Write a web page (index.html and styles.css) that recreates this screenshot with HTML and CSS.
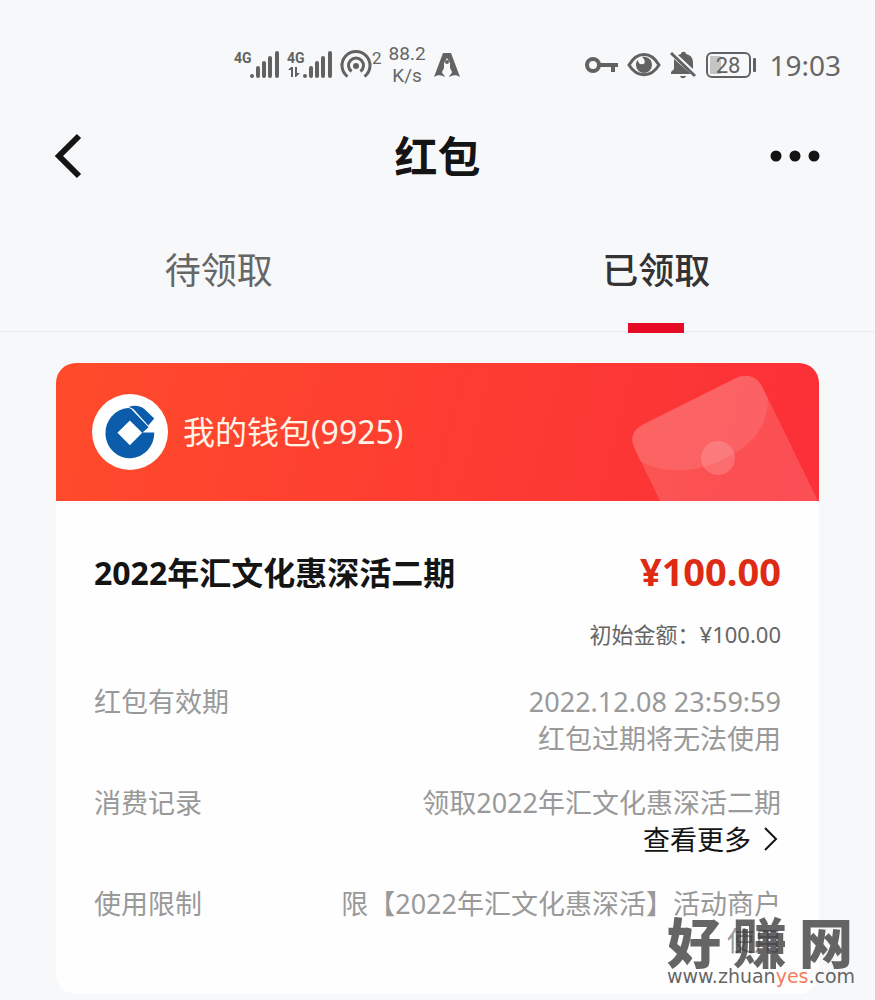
FILE: index.html
```
<!DOCTYPE html>
<html lang="zh-CN">
<head>
<meta charset="UTF-8" />
<meta name="viewport" content="width=device-width, initial-scale=1.0"/>
<title>红包</title>
<link rel="stylesheet" href="styles.css">
</head>
<body>

<div class="status-bar">
  <div class="status-left">
    <!-- signal, first SIM -->
    <svg class="signal" width="46" height="30" viewBox="0 0 46 30">
      <text x="-1" y="13" class="net">4G</text>
      <circle cx="17" cy="26" r="2"/>
      <path d="M23 18v8M29 13v13M35 8v18M42 3v23"/>
    </svg>
    <!-- signal, second SIM -->
    <svg class="signal" width="46" height="30" viewBox="0 0 46 30">
      <text x="-1" y="13" class="net">4G</text>
      <path class="arrows" d="M0 20l3-3h2v10h-2v-7zM7 17h2v6h3l-4 4h-1z"/>
      <circle cx="17" cy="26" r="2"/>
      <path d="M23 18v8M29 13v13M35 8v18M42 3v23"/>
    </svg>
    <div class="hotspot">
      <svg width="31" height="30" viewBox="0 0 31 30">
        <circle cx="15" cy="16" r="3"/>
        <path d="M6.500 26.500a14 14 0 1 1 17 0M10.500 21.500a7.500 7.500 0 1 1 9 0"/>
      </svg>
      <span>2</span>
    </div>
    <div class="speed"><span>88.2</span><span>K/s</span></div>
    <svg class="rocket" width="28" height="26" viewBox="0 0 28 26">
      <path fill-rule="evenodd" d="M10 1h8l9 24c-3-2-6-2-9-1l-2 1c0-2 3-3 3-5l-2-4v-5l-3-5-3 5v5l-2 4c0 2 3 3 3 5l-2-1c-3-1-6-1-9 1z"/>
      <circle cx="14" cy="10" r="2"/>
    </svg>
  </div>
  <div class="status-right">
    <svg width="34" height="28" viewBox="0 0 34 28">
      <circle class="line" cx="8" cy="14" r="6"/>
      <path class="line" d="M14 14h19M28 14v7"/>
    </svg>
    <svg width="34" height="28" viewBox="0 0 34 28">
      <path class="line thin" d="M2 14C10 0 24 0 32 14C24 27 10 27 2 14z"/>
      <path d="M15 6c6-1 10 3 10 8a8 8 0 0 1-16 0c0-2 0-3 2-5 0 3 2 5 5 4 3 0 2-5-1-7z"/>
    </svg>
    <svg width="28" height="28" viewBox="0 0 28 28">
      <path d="M9 4l3-1c0-3 5-3 5 0 5 1 7 4 7 9v6zM5 8l17 15H2v-2l3-3zM11 25h6c-1 3-5 3-6 0z"/>
      <path class="line thin" d="M2 2l24 23"/>
    </svg>
    <svg class="battery" width="52" height="28" viewBox="0 0 52 28">
      <rect class="level" x="5" y="5" width="11" height="18" rx="1"/>
      <rect class="line" x="2" y="2" width="43" height="24" rx="5"/>
      <rect x="48" y="7" width="3" height="14" rx="1"/>
      <text x="23" y="22" text-anchor="middle">28</text>
    </svg>
    <span class="time">19:03</span>
  </div>
</div>

<header class="nav">
  <button class="nav-btn" aria-label="返回">
    <svg width="28" height="46" viewBox="0 0 28 46"><path d="M25 2L5 22L25 42"/></svg>
  </button>
  <h1>红包</h1>
  <button class="nav-btn more" aria-label="更多">
    <svg width="50" height="12" viewBox="0 0 50 12">
      <circle cx="5" cy="5" r="5.500"/><circle cx="24" cy="5" r="5.500"/><circle cx="43" cy="5" r="5.500"/>
    </svg>
  </button>
</header>

<div class="tabs" role="tablist">
  <button class="tab" role="tab" aria-selected="false">待领取</button>
  <button class="tab active" role="tab" aria-selected="true">已领取</button>
</div>

<main class="card">
  <div class="card-head">
    <svg class="logo" width="76" height="76" viewBox="127 117 227 227">
      <circle cx="240.500" cy="230.500" r="113.500" fill="#fff"/>
      <path fill="#0b5cab" fill-rule="evenodd" d="M313 232A73 75 0 1 1 235 159C241 159 245 162 249 167L296 216L278 232zM240 196L203 233L240 270L277 233z"/>
      <path fill="#0b5cab" d="M236 156C255 149 272 152 285 163L313 190L295 211L260 172C252 162 247 158 236 156z"/>
    </svg>
    <span class="wallet">我的钱包(9925)</span>
    <!-- envelope -->
    <svg class="envelope" width="190" height="138" viewBox="0 0 190 138">
      <path fill="#fff" fill-opacity=".15" d="M31 138L5 84C1 75 4 67 13 62L107 15C118 10 128 13 134 25L189 138z"/>
      <path fill="#fff" fill-opacity=".1" d="M11 98L5 84C1 75 4 67 13 62L107 15C118 10 128 13 134 25L139 36C139 62 125 79 104 91C76 109 37 113 11 98z"/>
      <circle cx="89" cy="95" r="17" fill="#fff" fill-opacity=".16"/>
    </svg>
  </div>

  <div class="card-body">
    <div class="title-row">
      <h2>2022年汇文化惠深活二期</h2>
      <strong class="amount">¥100.00</strong>
    </div>
    <p class="initial">初始金额：¥100.00</p>

    <dl class="info">
      <div class="row">
        <dt>红包有效期</dt>
        <dd>2022.12.08 23:59:59<br>红包过期将无法使用</dd>
      </div>
      <div class="row">
        <dt>消费记录</dt>
        <dd>领取2022年汇文化惠深活二期
          <a class="see-more" href="#">查看更多
            <svg width="18" height="28" viewBox="0 0 18 28"><path d="M2 2L13 13L2 24"/></svg>
          </a>
        </dd>
      </div>
      <div class="row">
        <dt>使用限制</dt>
        <dd>限【2022年汇文化惠深活】活动商户使用</dd>
      </div>
    </dl>
  </div>
</main>

<div class="watermark">
  <div class="mark-name"><span>好</span><span>赚</span><span>网</span></div>
  <div class="mark-url">www.zhuan<em>yes</em>.com</div>
</div>

</body>
</html>
```
FILE: styles.css
```
* {
  box-sizing: border-box;
}

body {
  margin: 0;
  position: relative;
  min-height: 100vh;
  padding-bottom: 6px;
  background: #f7f8fa;
  color: #141414;
  font-family: "Noto Sans", "Noto Sans CJK SC", sans-serif;
}

h1, h2, p, dl, dd {
  margin: 0;
}

button {
  border: none;
  padding: 0;
  background: none;
  color: inherit;
  font-family: inherit;
  cursor: pointer;
}

svg {
  display: block;
  flex: none;
}

/* status bar */
.status-bar {
  display: flex;
  justify-content: space-between;
  height: 110px;
  padding: 20px 34px 0 235px;
  color: #666;
}

.status-left,
.status-right {
  display: flex;
  align-items: center;
  height: 90px;
}

.status-left {
  gap: 7px;
}

.status-right {
  gap: 8px;
}

.status-bar svg {
  fill: #626262;
  overflow: visible;
}

.signal path {
  stroke: #626262;
  stroke-width: 4;
  stroke-linecap: round;
}

.signal .arrows {
  stroke: none;
}

.net {
  font: bold 14px Roboto, sans-serif;
}

.hotspot {
  display: flex;
  font: 17px/17px Roboto, sans-serif;
}

.hotspot path {
  fill: none;
  stroke: #626262;
  stroke-width: 3;
}

.speed {
  display: flex;
  flex-direction: column;
  align-items: center;
  font: 19px/22px Roboto, sans-serif;
}

.status-bar .line {
  fill: none;
  stroke: #626262;
  stroke-width: 4;
}

.status-bar .thin {
  stroke-width: 3;
}

.battery .level {
  fill: #c4c4c4;
}

.status-bar .battery .line {
  stroke-width: 2;
}

.battery text {
  font: 22px Roboto, sans-serif;
}

.time {
  margin-left: 4px;
  font-size: 28px;
  line-height: 36px;
}

/* title bar */
.nav {
  display: flex;
  align-items: center;
  justify-content: space-between;
  height: 94px;
  padding: 0 54px;
}

.nav-btn {
  display: flex;
  width: 52px;
}

.nav-btn path {
  fill: none;
  stroke: #141414;
  stroke-width: 6;
}

.nav-btn svg {
  fill: #141414;
  overflow: visible;
}

.more {
  justify-content: flex-end;
}

.nav h1 {
  font-size: 43px;
  line-height: 60px;
}

/* tabs */
.tabs {
  display: flex;
  height: 128px;
  border-bottom: 1px solid #ececee;
}

.tab {
  position: relative;
  flex: 1;
  padding-top: 6px;
  font-size: 36px;
  line-height: 48px;
  color: #666;
}

.tab.active {
  color: #333;
  font-weight: 500;
}

.tab.active::after {
  content: "";
  position: absolute;
  left: calc(50% - 28px);
  bottom: -2px;
  width: 56px;
  height: 10px;
  background: #e60a25;
}

/* red packet card */
.card {
  margin: 31px 56px 0;
  border-radius: 20px;
  background: #fefefe;
  overflow: hidden;
}

.card-head {
  position: relative;
  display: flex;
  align-items: center;
  gap: 15px;
  height: 138px;
  padding-left: 36px;
  background: linear-gradient(105deg, #ff4b2b, #fb2f38);
  color: #fff3e6;
}

.wallet {
  font-size: 32px;
  line-height: 44px;
}

.envelope {
  position: absolute;
  right: 0;
  bottom: 0;
}

.card-body {
  padding: 48px 38px 35px;
}

.title-row {
  display: flex;
  align-items: flex-start;
  justify-content: space-between;
}

.title-row h2 {
  font-size: 32px;
  line-height: 48px;
}

.amount {
  color: #e02b14;
  font-size: 38px;
  line-height: 44px;
}

.initial {
  margin: 19px 0 31px;
  color: #666;
  font-size: 22px;
  line-height: 36px;
  text-align: right;
}

.info {
  display: flex;
  flex-direction: column;
  gap: 27px;
  color: #999;
  font-size: 27px;
  line-height: 37px;
}

.row {
  display: flex;
  justify-content: space-between;
}

.row dd {
  max-width: 17em;
  text-align: right;
}

.see-more {
  display: flex;
  justify-content: flex-end;
  align-items: center;
  gap: 12px;
  color: #141414;
  text-decoration: none;
}

.see-more path {
  fill: none;
  stroke: #141414;
  stroke-width: 2;
}

/* site mark over the page corner */
.watermark {
  position: absolute;
  right: 22px;
  bottom: 14px;
  width: 186px;
  color: #333;
  opacity: .75;
}

.mark-name {
  display: flex;
  justify-content: space-between;
  font-size: 54px;
  font-weight: 900;
  line-height: 46px;
}

.mark-url {
  font: 19px/20px "DejaVu Sans", sans-serif;
}

.mark-url em {
  color: #f2501e;
  font-style: normal;
}
```
